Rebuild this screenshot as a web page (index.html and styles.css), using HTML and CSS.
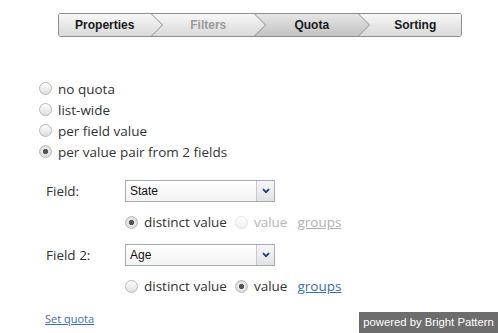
FILE: index.html
```html
<!DOCTYPE html>
<html>
<head>
    <link rel="stylesheet" href="styles.css">
</head>
<body>
    <div class="page">
        <div class="steps">
            <div class="step">Properties</div>
            <svg class="sep" viewBox="0 0 12 22" preserveAspectRatio="none">
                <defs>
                    <linearGradient id="gl" x1="0" y1="0" x2="0" y2="1">
                        <stop offset="0" stop-color="#f7f7f7"/>
                        <stop offset="1" stop-color="#d9d9d9"/>
                    </linearGradient>
                    <linearGradient id="gd" x1="0" y1="0" x2="0" y2="1">
                        <stop offset="0" stop-color="#e6e6e6"/>
                        <stop offset="1" stop-color="#c2c2c2"/>
                    </linearGradient>
                </defs>
                <polygon points="0,0 0.5,0 11.5,11 0.5,22 0,22" fill="url(#gl)"/>
                <polygon points="0.5,0 12,0 12,22 0.5,22 11.5,11" fill="url(#gl)"/>
                <polyline points="0.5,0 11.5,11 0.5,22" fill="none" stroke="#8c8c8c" stroke-width="1"/>
            </svg>
            <div class="step muted">Filters</div>
            <svg class="sep" viewBox="0 0 12 22" preserveAspectRatio="none">
                <polygon points="0,0 0.5,0 11.5,11 0.5,22 0,22" fill="url(#gl)"/>
                <polygon points="0.5,0 12,0 12,22 0.5,22 11.5,11" fill="url(#gd)"/>
                <polyline points="0.5,0 11.5,11 0.5,22" fill="none" stroke="#8c8c8c" stroke-width="1"/>
            </svg>
            <div class="step current">Quota</div>
            <svg class="sep" viewBox="0 0 12 22" preserveAspectRatio="none">
                <polygon points="0,0 0.5,0 11.5,11 0.5,22 0,22" fill="url(#gd)"/>
                <polygon points="0.5,0 12,0 12,22 0.5,22 11.5,11" fill="url(#gl)"/>
                <polyline points="0.5,0 11.5,11 0.5,22" fill="none" stroke="#8c8c8c" stroke-width="1"/>
            </svg>
            <div class="step">Sorting</div>
        </div>

        <div class="modes">
            <label class="opt"><input type="radio" name="mode"> no quota</label>
            <label class="opt"><input type="radio" name="mode"> list-wide</label>
            <label class="opt"><input type="radio" name="mode"> per field value</label>
            <label class="opt"><input type="radio" name="mode" checked> per value pair from 2 fields</label>
        </div>

        <div class="field-row">
            <span class="field-label">Field:</span>
            <div class="dropdown">
                <span class="dropdown-text">State</span>
                <span class="dropdown-btn">
                    <svg viewBox="0 0 8 6" width="8" height="6"><path d="M1 1.2 L4 4.2 L7 1.2" fill="none" stroke="#1f3f7a" stroke-width="1.8"/></svg>
                </span>
            </div>
        </div>
        <div class="sub-row">
            <label class="opt"><input type="radio" name="f1" checked> distinct value</label>
            <label class="opt disabled"><input type="radio" name="f1" disabled> value</label>
            <a class="groups disabled">groups</a>
        </div>

        <div class="field-row second">
            <span class="field-label">Field 2:</span>
            <div class="dropdown">
                <span class="dropdown-text">Age</span>
                <span class="dropdown-btn">
                    <svg viewBox="0 0 8 6" width="8" height="6"><path d="M1 1.2 L4 4.2 L7 1.2" fill="none" stroke="#1f3f7a" stroke-width="1.8"/></svg>
                </span>
            </div>
        </div>
        <div class="sub-row">
            <label class="opt"><input type="radio" name="f2"> distinct value</label>
            <label class="opt"><input type="radio" name="f2" checked> value</label>
            <a class="groups" href="#">groups</a>
        </div>

        <a class="set-quota" href="#">Set quota</a>
    </div>

    <div class="powered">powered by Bright Pattern</div>
</body>
</html>
```

FILE: styles.css
```css
body {
    margin: 0;
    font-family: "Open Sans", "DejaVu Sans", sans-serif;
    color: #333;
    background: #fff;
}
.page {
    padding-top: 13px;
}
.steps {
    display: flex;
    width: 402px;
    height: 22px;
    margin-left: 58px;
    border: 1px solid #8c8c8c;
    border-radius: 3px;
    overflow: hidden;
}
.step {
    flex: 1;
    display: flex;
    align-items: center;
    justify-content: center;
    background: linear-gradient(#f7f7f7, #d9d9d9);
    font-family: "Liberation Sans", Arial, sans-serif;
    font-weight: bold;
    font-size: 12px;
    color: #1a1a1a;
}
.step.muted { color: #9a9a9a; }
.step.current { background: linear-gradient(#e6e6e6, #c2c2c2); }
.sep {
    width: 12px;
    height: 22px;
    flex: none;
    display: block;
}
.modes {
    margin-top: 41px;
    padding-left: 39px;
}
.opt {
    display: flex;
    align-items: center;
    height: 21px;
    font-size: 13.5px;
    color: #333;
}
input[type="radio"] {
    appearance: none;
    -webkit-appearance: none;
    width: 13px;
    height: 13px;
    margin: 0 6px 0 0;
    border: 1px solid #b9b9b9;
    border-radius: 50%;
    background: linear-gradient(#ffffff, #dedede);
    box-sizing: border-box;
}
input[type="radio"]:checked {
    background: radial-gradient(circle, #555 0, #555 2.3px, #e9e9e9 3px, #d6d6d6 6.5px);
}
input[type="radio"]:disabled {
    border-color: #e2e2e2;
    background: linear-gradient(#ffffff, #f0f0f0);
}
.opt.disabled { color: #b5b5b5; }
.field-row {
    display: flex;
    align-items: center;
    margin-top: 18px;
    padding-left: 46px;
    height: 22px;
    font-size: 13.5px;
}
.field-row.second { margin-top: 11px; }
.field-label {
    width: 79px;
}
.dropdown {
    display: flex;
    width: 148px;
    height: 20px;
    border: 1px solid #a6abbb;
    background: linear-gradient(#ffffff, #f3f3f3);
}
.dropdown-text {
    flex: 1;
    padding-left: 4px;
    line-height: 20px;
    font-family: "Liberation Sans", Arial, sans-serif;
    font-size: 12px;
    color: #111;
}
.dropdown-btn {
    width: 17px;
    display: flex;
    align-items: center;
    justify-content: center;
    border-left: 1px solid #c3c7d2;
    background: linear-gradient(#f6f6f6, #e2e2e2);
}
.sub-row {
    display: flex;
    align-items: center;
    margin-top: 9px;
    padding-left: 125px;
    height: 22px;
}
.sub-row .opt {
    margin-right: 8px;
}
.groups {
    font-size: 13.5px;
    color: #3b6db5;
    text-decoration: underline;
    margin-left: 2px;
}
.groups.disabled { color: #b0b0b0; }
.set-quota {
    display: inline-block;
    margin-top: 14px;
    margin-left: 45px;
    font-size: 11px;
    color: #3b6db5;
}
.powered {
    position: fixed;
    right: 0;
    bottom: 0;
    width: 139px;
    height: 21px;
    line-height: 21px;
    text-align: center;
    background: #6d6d6d;
    color: #fff;
    font-family: "Liberation Sans", Arial, sans-serif;
    font-size: 11.3px;
}
```
